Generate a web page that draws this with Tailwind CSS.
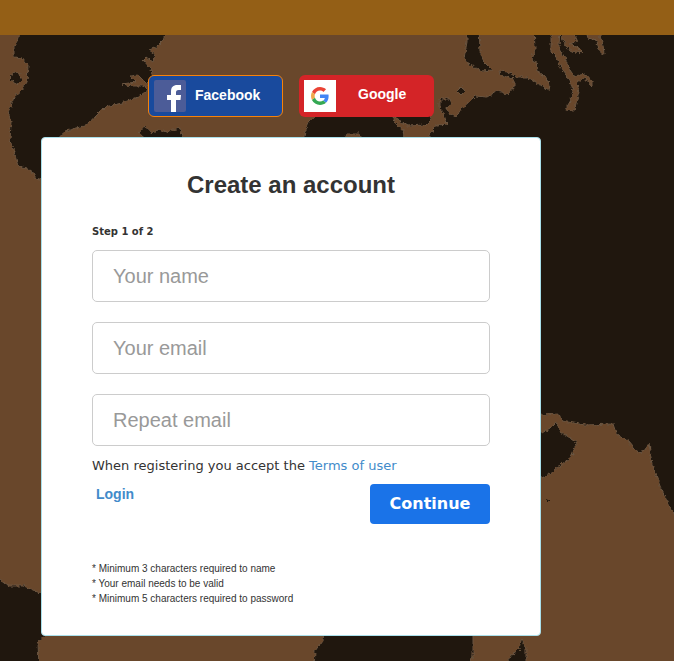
<!DOCTYPE html>
<html lang="en">
<head>
  <meta charset="UTF-8">
  <meta name="viewport" content="width=device-width, initial-scale=1.0">
  <title>Create an account</title>
  <script src="https://cdn.jsdelivr.net/npm/@tailwindcss/browser@4"></script>
</head>
<body class="min-h-screen flex flex-col bg-[#69472b] font-['Liberation_Sans',sans-serif] text-[#333333]">
  <header class="h-[35px] bg-[#945f16]"></header>

  <main class="relative flex-1 overflow-hidden pb-6">
    <!-- World map background -->
    <svg class="absolute left-0 top-0" width="674" height="626" viewBox="0 35 674 626" aria-hidden="true">
      <defs>
        <filter id="coast" x="0" y="0" width="100%" height="100%" color-interpolation-filters="sRGB">
          <feTurbulence type="fractalNoise" baseFrequency="0.3" numOctaves="2" seed="4" result="noise" />
          <feDisplacementMap in="SourceGraphic" in2="noise" scale="5" xChannelSelector="R" yChannelSelector="G" />
        </filter>
      </defs>
      <g filter="url(#coast)" fill="#20170e" stroke="#6b5540" stroke-width="1">
        <path d="M20 25 L19 38 L14 46 L14 57 L22 58 L28 66 L27 82 L22 90 L14 97 L11 106 L8 112 L11 122 L10 140 L14 152 L18 166 L26 168 L32 172 L36 178 L60 185 L60 136 L66 131 L84 126 L95 117 L105 107 L122 103 L138 97 L148 90 L144 86 L132 86 L122 84 L136 82 L130 76 L138 75 L148 85 L153 79 L151 69 L143 60 L146 57 L153 62 L155 54 L149 50 L157 47 L163 41 L168 25 Z" />
        <path d="M11 74 L17 71 L22 79 L17 84 L10 80 Z" />
        <path d="M139 133 L145 126 L151 133 L158 130 L166 132 L180 128 L184 145 L152 145 Z" />
        <path d="M302 145 L305 132 L309 122 L316 115 L330 105 L390 105 L432 105 L431 119 L425 125 L408 126 L393 117 L396 124 L403 130 L405 145 L364 145 L360 134 L347 134 L342 145 Z" />
        <path d="M430 145 L430 134 L437 125 L447 124 L444 115 L440 108 L440 99 L450 99 L452 104 L446 107 L448 113 L456 117 L461 109 L468 103 L475 96 L487 97 L497 91 L508 94 L514 87 L514 79 L500 75 L499 71 L508 72 L516 77 L526 77 L540 84 L549 90 L550 85 L545 77 L538 72 L536 62 L532 60 L535 50 L534 25 L551 25 L551 52 L556 57 L562 70 L570 80 L573 90 L571 100 L565 110 L574 111 L579 92 L577 83 L584 77 L592 86 L592 81 L586 74 L574 76 L570 70 L565 58 L559 48 L560 25 L562 38 L567 48 L575 52 L583 53 L577 47 L570 44 L577 41 L570 25 L584 25 L588 38 L597 41 L599 51 L604 55 L603 45 L596 25 L690 25 L690 530 L671 510 L660 486 L652 464 L649 443 L645 451 L638 453 L629 442 L616 433 L613 424 L585 425 L562 421 L559 414 L542 415 L530 420 L530 145 Z" />
        <path d="M467 25 L467 42 L464 58 L470 65 L482 71 L492 70 L484 62 L480 52 L479 25 Z" />
        <path d="M457 91 L462 86 L465 91 L461 95 Z" />
        <path d="M530 433 L542 433 L550 428 L556 422 L561 432 L570 438 L577 443 L571 457 L562 464 L554 471 L544 477 L530 482 Z" />
        <path d="M0 580 L8 586 L24 586 L42 594 L60 625 L45 636 L38 642 L39 670 L-10 670 L-10 580 Z" />
        <path d="M325 625 L323 640 L315 651 L314 670 L469 670 L473 655 L473 625 Z" />
        <path d="M504 664 L514 653 L519 649 L522 638 L526 649 L526 660 L519 670 L504 670 Z" />
        <path d="M546 499 L550 501 L550 502 L546 502 Z" stroke="none" />
      </g>
    </svg>

    <div class="relative mx-[41px] mt-10 max-w-[500px]">
      <!-- Social login -->
      <div class="flex justify-center gap-4">
        <a href="#" class="flex w-[135px] h-[42px] items-center rounded-md border border-[#f5820b] bg-[#194a9d] pl-[5px] text-sm font-bold text-white">
          <svg class="mr-[9px] shrink-0" width="32" height="32" viewBox="0 0 32 32" aria-hidden="true">
            <rect width="32" height="32" rx="2" fill="#4c5c98" />
            <path d="M17 32V20H13V15H17V12C17 7 19 5 23.500 5H27V10H24.500C22.500 10 22 11 22 12.500V15H27L26.500 20H22V32Z" fill="#fff" />
          </svg>
          <span class="pb-0.5">Facebook</span>
        </a>
        <a href="#" class="flex w-[135px] h-[42px] items-center rounded-md bg-[#d42427] pl-[5px] text-sm font-bold text-white">
          <svg class="mr-[22px] shrink-0" width="32" height="32" viewBox="0 0 32 32" aria-hidden="true">
            <rect width="32" height="32" fill="#fff" />
            <g transform="translate(7 7) scale(0.375)">
              <path fill="#ea4335" d="M24 9.500c3.540 0 6.710 1.220 9.210 3.600l6.850-6.850C35.900 2.380 30.470 0 24 0 14.620 0 6.510 5.380 2.560 13.220l7.980 6.190C12.430 13.720 17.740 9.500 24 9.500z" />
              <path fill="#4285f4" d="M46.980 24.550c0-1.570-.15-3.090-.38-4.550H24v9.020h12.940c-.58 2.960-2.260 5.480-4.780 7.180l7.730 6c4.510-4.180 7.090-10.360 7.090-17.650z" />
              <path fill="#f0a94b" d="M10.530 28.590c-.48-1.450-.76-2.990-.76-4.590s.27-3.140.76-4.590l-7.980-6.190C.92 16.460 0 20.120 0 24c0 3.880.92 7.540 2.560 10.780l7.970-6.190z" />
              <path fill="#34a853" d="M24 48c6.480 0 11.930-2.130 15.890-5.810l-7.730-6c-2.150 1.450-4.920 2.300-8.160 2.300-6.260 0-11.570-4.220-13.470-9.910l-7.980 6.190C6.510 42.620 14.620 48 24 48z" />
            </g>
          </svg>
          <span class="pb-1">Google</span>
        </a>
      </div>

      <!-- Register form -->
      <form class="mt-5 rounded border border-[#a9dfea] bg-white px-[50px] pt-8 pb-[29px]">
        <h1 class="text-center text-2xl leading-[30px] font-bold">Create an account</h1>
        <p class="mt-[25px] mb-[11px] font-['DejaVu_Sans',sans-serif] text-[10px] leading-[14px] font-bold">Step 1 of 2</p>
        <div class="flex flex-col gap-5">
          <input type="text" aria-label="Your name" placeholder="Your name" class="h-[52px] w-full rounded-[5px] border border-[#cccccc] px-5 text-xl placeholder:text-[#999999]">
          <input type="email" aria-label="Your email" placeholder="Your email" class="h-[52px] w-full rounded-[5px] border border-[#cccccc] px-5 text-xl placeholder:text-[#999999]">
          <input type="email" aria-label="Repeat email" placeholder="Repeat email" class="h-[52px] w-full rounded-[5px] border border-[#cccccc] px-5 text-xl placeholder:text-[#999999]">
        </div>
        <p class="mt-[11px] font-['DejaVu_Sans',sans-serif] text-[13px] leading-[18px]">When registering you accept the <a href="#" class="text-[#428bca]">Terms of user</a></p>
        <div class="mt-[9px] flex items-start justify-between">
          <a href="#" class="pl-1 text-sm font-bold text-[#428bca]">Login</a>
          <button type="submit" class="h-10 w-[120px] rounded bg-[#1a73e8] font-['DejaVu_Sans',sans-serif] text-base font-bold text-white">Continue</button>
        </div>
        <ul class="mt-[37px] text-[10px] leading-[15px]">
          <li>* Minimum 3 characters required to name</li>
          <li>* Your email needs to be valid</li>
          <li>* Minimum 5 characters required to password</li>
        </ul>
      </form>
    </div>
  </main>
</body>
</html>
